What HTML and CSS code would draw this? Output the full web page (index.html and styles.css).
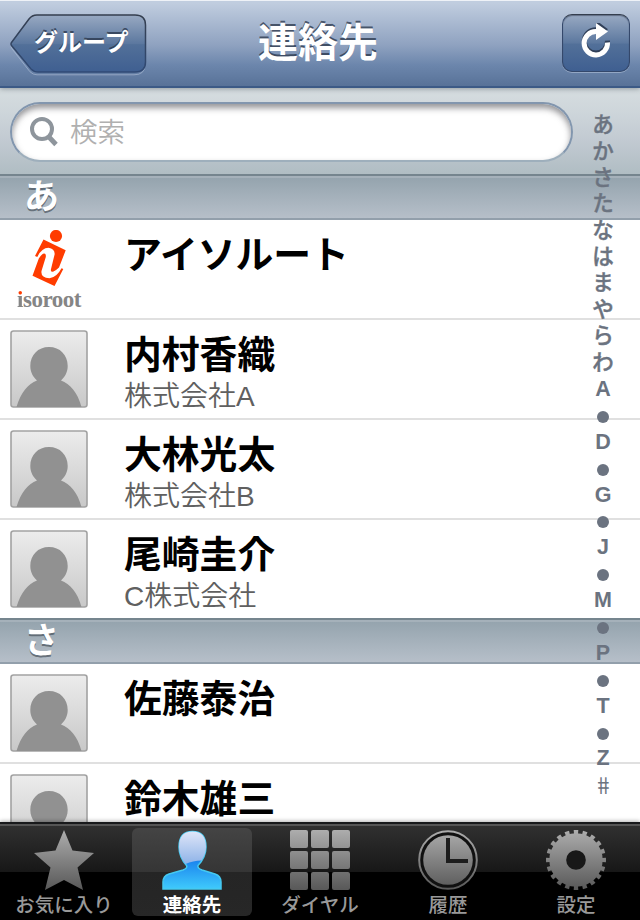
FILE: index.html
```html
<!DOCTYPE html>
<html lang="ja">
<head>
<meta charset="utf-8">
<title>連絡先</title>
<link rel="stylesheet" href="styles.css">
</head>
<body>
<svg class="defs" width="0" height="0" aria-hidden="true">
  <defs>
    <linearGradient id="photo" x1="0" y1="0" x2="0" y2="1"><stop offset="0" stop-color="#ececec"/><stop offset="1" stop-color="#c8c8c8"/></linearGradient>
    <linearGradient id="metal" gradientUnits="userSpaceOnUse" x1="0" y1="0" x2="0" y2="60"><stop offset="0" stop-color="#adadad"/><stop offset="1" stop-color="#585858"/></linearGradient>
    <linearGradient id="button" x1="0" y1="0" x2="0" y2="1"><stop offset="0" stop-color="#98a9c2"/><stop offset=".5" stop-color="#5c789f"/><stop offset=".52" stop-color="#527099"/><stop offset="1" stop-color="#3f5f91"/></linearGradient>
    <linearGradient id="edge" x1="0" y1="0" x2="0" y2="1"><stop offset="0" stop-color="#343e4e"/><stop offset="1" stop-color="#304a75"/></linearGradient>
    <linearGradient id="head" x1="0" y1="0" x2="0" y2="1"><stop offset="0" stop-color="#dfe6f8"/><stop offset="1" stop-color="#8eb3e8"/></linearGradient>
    <linearGradient id="torso" x1="0" y1=".5" x2="0" y2="1"><stop offset="0" stop-color="#1b84ee"/><stop offset="1" stop-color="#3fcafc"/></linearGradient>
    <symbol id="person" viewBox="0 0 78 78">
      <rect x="1" y="1" width="76" height="76" rx="2.5" fill="url(#photo)" stroke="#a2a2a2" stroke-width="1.6"/>
      <path d="M6.500 77C11 62 18 54 27 50.500C23 47 20.300 42 20.300 36C20.300 25 28 17 39 17S57.700 25 57.700 36C57.700 42 55 47 51 50.500C60 54 67.500 62 71.500 77Z" fill="#919191"/>
    </symbol>
  </defs>
</svg>
<div class="screen">
  <header class="navbar">
    <div class="back">
      <svg class="back-shape" width="140" height="62" viewBox="0 0 140 62">
        <path d="M25 2H124Q135 2 135 12V50Q135 60 124 60H27Q23 60 20 57L2 34Q0 31 2 28L18 6Q21 2 25 2Z" transform="translate(0 .8)" fill="none" stroke="#b3c2d9" stroke-opacity=".6"/>
        <path d="M27 1H125Q135.500 1 135.500 11V48Q135.500 58 125 58H28Q24 58 21 55L1.500 31.500Q.5 30 1.500 28.500L19 5Q22 1 27 1Z" fill="url(#button)" stroke="url(#edge)" stroke-width="1.500"/>
      </svg>
      <span class="back-label">グループ</span>
    </div>
    <h1 class="title">連絡先</h1>
    <div class="refresh">
      <svg width="36" height="40" viewBox="0 0 36 40">
        <g fill="none" stroke="#303f58" stroke-width="5" transform="translate(-1 -2.800)"><path d="M30.500 20.500A11.600 11.600 0 1 1 19 9.500"/><path d="M19 0L31 9L19 17Z" fill="#303f58" stroke="none"/></g>
        <g transform="translate(-1 -1)"><path d="M30.500 20.500A11.700 11.700 0 1 1 19 9.500" fill="none" stroke="#fff" stroke-width="5"/>
        <path d="M19 1L31 9.500L19 18Z" fill="#fff"/></g>
      </svg>
    </div>
  </header>

  <main class="list">
    <div class="searchbar">
      <div class="field">
        <svg width="30" height="32" viewBox="0 0 30 32"><circle cx="14" cy="13" r="10" fill="none" stroke="#8e959c" stroke-width="4"/><path d="M20.500 20.500L28 28.500" stroke="#8e959c" stroke-width="4.800"/></svg>
        <span class="placeholder">検索</span>
      </div>
    </div>
    <h2 class="section">あ</h2>
    <div class="row">
      <div class="logo">
        <svg width="40" height="58" viewBox="0 0 40 58">
          <circle cx="27" cy="6" r="6.100" fill="#ff3c00"/>
          <path d="M14.500 9.500L36.700 20.300L30 37.500Q26.500 41 24 41.700Q21.500 42 21.900 39.500L25.700 24Q25.500 18.500 19.500 17.700Q12.500 18 8.300 27L6 26Z" fill="#ff3c00"/>
          <path d="M25.500 56L34.300 39L32.500 38.200Q28 47 20.500 48.300Q11.500 48 12.500 41L16.800 27Q17.300 22.500 14 23.800Q12 25 9.800 28.500L3.500 45.700Z" fill="#ff3c00"/>
        </svg>
        <span class="wordmark"><span class="spot">i</span>soroot</span>
      </div>
      <div class="who"><div class="name">アイソルート</div></div>
    </div>
    <div class="row">
      <svg class="photo"><use href="#person"/></svg>
      <div class="who"><div class="name">内村香織</div><div class="org">株式会社A</div></div>
    </div>
    <div class="row">
      <svg class="photo"><use href="#person"/></svg>
      <div class="who"><div class="name">大林光太</div><div class="org">株式会社B</div></div>
    </div>
    <div class="row last">
      <svg class="photo"><use href="#person"/></svg>
      <div class="who"><div class="name">尾崎圭介</div><div class="org">C株式会社</div></div>
    </div>
    <h2 class="section">さ</h2>
    <div class="row">
      <svg class="photo"><use href="#person"/></svg>
      <div class="who"><div class="name">佐藤泰治</div></div>
    </div>
    <div class="row">
      <svg class="photo"><use href="#person"/></svg>
      <div class="who"><div class="name">鈴木雄三</div></div>
    </div>
    <nav class="index">
      <span>あ</span><span>か</span><span>さ</span><span>た</span><span>な</span><span>は</span><span>ま</span><span>や</span><span>ら</span><span>わ</span>
      <b>A</b><i></i><b>D</b><i></i><b>G</b><i></i><b>J</b><i></i><b>M</b><i></i><b>P</b><i></i><b>T</b><i></i><b>Z</b><span class="hash">#</span>
    </nav>
  </main>

  <footer class="tabs">
    <div class="tab">
      <svg viewBox="0 0 60 60"><path d="M30 0L38.500 20.500L60 23L43.500 37.500L49 60L30 50L11 60L16.500 37.500L0 23L21.500 20.500Z" fill="url(#metal)"/></svg>
      <span>お気に入り</span>
    </div>
    <div class="tab active">
      <svg viewBox="0 0 60 60"><path d="M1 59V52Q1 46 7 44L21 40Q26 38 24.500 35.500Q17 27 17 17C17 7 21 1.500 30.500 1.500S44 7 44 17Q44 27 36 35.500Q35 38 40 40L53 44Q59 46 59 52V59Z" fill="url(#torso)" stroke="#45c9f0" stroke-width="1.500"/><path d="M23.500 34Q17 26 17 17C17 7 21 1.500 30.500 1.500S44 7 44 17Q44 24 39.500 30.500Q31 30.500 23.500 34Z" fill="url(#head)"/></svg>
      <span>連絡先</span>
    </div>
    <div class="tab">
      <svg viewBox="0 0 60 60"><g fill="url(#metal)"><rect width="18" height="18" rx="2"/><rect x="21" width="18" height="18" rx="2"/><rect x="42" width="18" height="18" rx="2"/><rect y="21" width="18" height="18" rx="2"/><rect x="21" y="21" width="18" height="18" rx="2"/><rect x="42" y="21" width="18" height="18" rx="2"/><rect y="42" width="18" height="18" rx="2"/><rect x="21" y="42" width="18" height="18" rx="2"/><rect x="42" y="42" width="18" height="18" rx="2"/></g></svg>
      <span>ダイヤル</span>
    </div>
    <div class="tab">
      <svg viewBox="0 0 60 60"><circle cx="30" cy="30" r="28.800" fill="#111" stroke="url(#metal)" stroke-width="2"/><circle cx="30" cy="30" r="24.800" fill="url(#metal)"/><path d="M30 8V31H50" fill="none" stroke="#1d1d1d" stroke-width="4"/></svg>
      <span>履歴</span>
    </div>
    <div class="tab">
      <svg viewBox="0 0 60 60"><circle cx="30" cy="30" r="26.700" fill="url(#metal)"/><circle cx="30" cy="30" r="28" fill="none" stroke="url(#metal)" stroke-width="4" pathLength="40" stroke-dasharray="1 1" stroke-dashoffset=".5"/><circle cx="30" cy="30" r="9.800" fill="#181818"/></svg>
      <span>設定</span>
    </div>
  </footer>
</div>
</body>
</html>
```
FILE: styles.css
```css
* { box-sizing: border-box; }
body { margin: 0; font-family: "Liberation Sans", "Noto Sans CJK JP", sans-serif; background: #fff; }
h1, h2 { margin: 0; }
svg { display: block; flex: none; }
.defs { position: absolute; }
.screen { width: 640px; height: 920px; display: flex; flex-direction: column; overflow: hidden; }

.navbar {
  height: 88px; flex: none; position: relative; z-index: 1;
  display: grid; grid-template-columns: 140px 336px 1fr; align-items: start;
  padding: 14px 10px 0;
  background: linear-gradient(#c0cddf 2px, #8fa2c0 44px, #6c86ac 64px, #587298 85px);
  border-top: 1px solid #eef2f7; border-bottom: 2px solid #3c5a86;
  box-shadow: 0 1px 5px rgba(60, 70, 80, .45);
  color: #fff; text-shadow: 0 -2px 0 rgba(40, 52, 72, .75);
}
.back { display: grid; margin-top: -1px; }
.back-shape, .back-label { grid-area: 1 / 1; }
.back-label { font-size: 24px; line-height: 57px; font-weight: 700; padding-left: 24px; position: relative; white-space: nowrap; }
.title { font-size: 40px; line-height: 56px; font-weight: 700; text-align: center; }
.refresh {
  width: 68px; height: 58px; margin: -1px 0 0; justify-self: end;
  display: flex; align-items: center; justify-content: center;
  border: 1.5px solid #34486b; border-top-color: #343e4e; border-radius: 10px;
  background: linear-gradient(#98a9c2, #5c789f 50%, #527099 52%, #3f5f91);
  box-shadow: 0 1px 0 rgba(179, 194, 217, .6), inset 0 1px 1px rgba(40, 50, 70, .5);
}

.list { flex: 1; min-height: 0; position: relative; overflow: hidden; }
.searchbar { height: 86px; padding: 14px 10px; background: linear-gradient(#d6dde0, #cdd5da 30%, #c2cad2 60%, #b0bdc3); }
.field {
  width: 563px; height: 60px; border-radius: 30px; background: #fff;
  border: 2px solid #8296ae; border-bottom-color: #9eafbc;
  box-shadow: inset 0 4px 6px rgba(60, 60, 65, .55);
  display: flex; align-items: center; padding: 0 16px; gap: 12px;
}
.placeholder { font-size: 27.5px; font-weight: 350; color: #b0b0b0; line-height: 56px; padding-top: 1px; }
.section {
  height: 46px; padding-left: 24px; font-size: 35px; line-height: 42px; color: #fff; font-weight: 600;
  border-top: 2px solid #75858e; border-bottom: 2px solid #929fab;
  background: linear-gradient(#a5b1ba 2px, #95a4ae 2px, #b6bfc9);
  text-shadow: 0 2px 0 rgba(70, 80, 90, .7);
}
.row { height: 100px; border-bottom: 2px solid #e0e0e0; padding: 10px 10px 0; display: flex; }
.row.last { height: 98px; border-bottom: 0; }
.photo { width: 78px; height: 78px; }
.who { padding-left: 36px; }
.name { font-size: 37.8px; line-height: 50px; font-weight: 700; color: #000; }
.org { font-size: 28px; line-height: 34px; font-weight: 350; color: #606060; }
.logo { width: 78px; display: flex; flex-direction: column; align-items: center; }
.wordmark { font: 700 23px/23px "Liberation Serif", serif; color: #858585; letter-spacing: -.5px; }
.spot { background: linear-gradient(#ff3c00 8px, #858585 8px); background-clip: text; -webkit-background-clip: text; color: transparent; }

.index {
  position: absolute; top: 24px; right: 23px; width: 28px; height: 686px;
  display: grid; grid-template-rows: repeat(26, 1fr); justify-items: center; align-items: center;
  color: #6b7380; font-size: 21.5px; font-weight: 500; line-height: 27px;
}
.index span { height: 26px; -webkit-text-stroke: .4px #6b7380; }
.index b { height: 26px; }
.index i { width: 12px; height: 12px; border-radius: 50%; background: #6b7380; margin-top: 3px; }
.index .hash { font-family: "Noto Sans CJK JP", sans-serif; font-weight: 400; font-size: 23px; line-height: 24px; transform: skewX(7deg); -webkit-text-stroke: 0; }

.tabs {
  height: 98px; flex: none; display: flex; position: relative;
  border-top: 2px solid #18191b;
  background: linear-gradient(#555 0 2px, #303030 2px, #171717 48px, #000 48px);
  box-shadow: 0 -1px 4px rgba(0, 0, 0, .3);
}
.tab { width: 120px; margin: 4px; height: 88px; padding-top: 2px; display: flex; flex-direction: column; align-items: center; border-radius: 6px; color: #999; font-size: 19.5px; font-weight: 500; line-height: 30px; white-space: nowrap; }
.tab svg { width: 60px; height: 60px; overflow: visible; }
.tab.active { background: linear-gradient(#444, #353535 44px, #252525 44px, #272727); color: #fff; font-weight: 700; }
```
